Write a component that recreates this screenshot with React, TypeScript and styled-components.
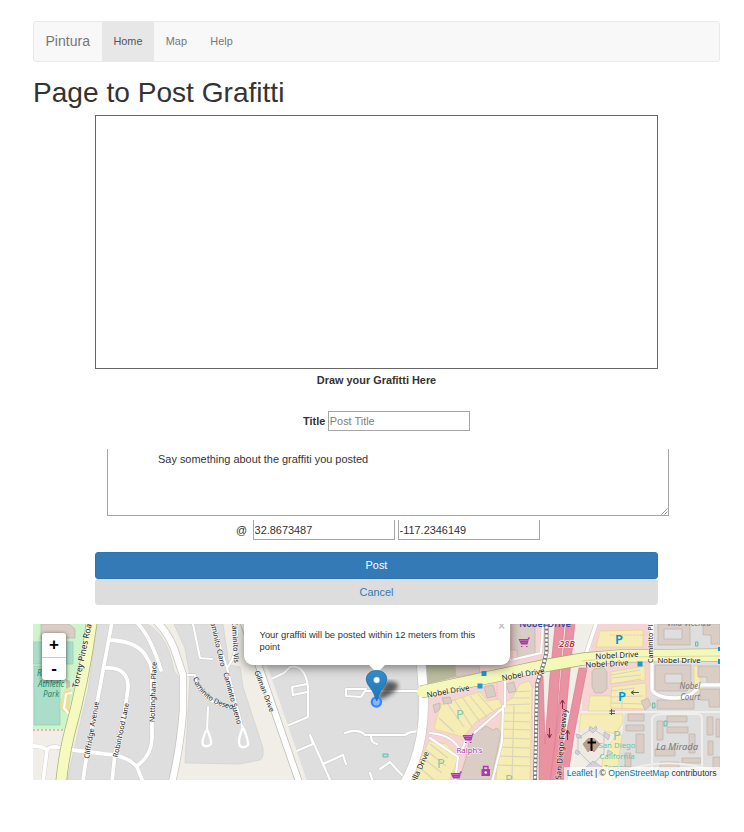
import React from "react";
import styled, { createGlobalStyle, css } from "styled-components";

const GlobalStyle = createGlobalStyle`
  *, *::before, *::after { box-sizing: border-box; }
  body {
    margin: 0;
    background: #fff;
    color: #333;
    font-family: "Liberation Sans", Arial, sans-serif;
    font-size: 11px;
    line-height: 16px;
  }
`;

const Page = styled.div`
  width: 744px;
  min-height: 832px;
  padding: 21px 24px 0 33px;
`;

const Navbar = styled.nav`
  display: flex;
  height: 41px;
  border: 1px solid #e9e9e9;
  border-radius: 3px;
  background: #f8f8f8;
`;

const Brand = styled.a`
  width: 68px;
  padding-left: 11.5px;
  color: #777;
  font-size: 14.04px;
  line-height: 39px;
`;

const NavLink = styled.a<{ $active?: boolean }>`
  padding: 0 11.9px 0 11.4px;
  color: ${(p) => (p.$active ? "#555" : "#777")};
  background: ${(p) => (p.$active ? "#e7e7e7" : "transparent")};
  font-size: 10.92px;
  line-height: 39px;
`;

const Heading = styled.h1`
  margin: 15px 0 7px;
  font-size: 28.1px;
  font-weight: 400;
  line-height: 31px;
`;

const Form = styled.form`
  display: flex;
  flex-direction: column;
  width: 563px;
  margin-left: 62px;
`;

const Canvas = styled.div`
  height: 254px;
  border: 1px solid #666;
`;

const CanvasLabel = styled.strong`
  margin-top: 3px;
  text-align: center;
  font-size: 10.92px;
`;

const TitleRow = styled.label`
  display: flex;
  align-items: center;
  gap: 3px;
  margin: 23px 0 0 208px;
  font-size: 10.92px;
  font-weight: 700;
`;

const TextInput = styled.input<{ $open?: boolean }>`
  width: 142px;
  height: 20px;
  padding: 0 0.6px;
  border: 1px solid #a6a6a6;
  border-radius: 0;
  outline: 0;
  background: #fff;
  color: #333;
  font: 10.92px "Liberation Sans", Arial, sans-serif;
  ${(p) => p.$open && css`border-top: 0;`}
  &::placeholder { color: #808080; opacity: 1; }
`;

const DescriptionBox = styled.div`
  position: relative;
  width: 562px;
  height: 67px;
  margin: 18px 0 0 12px;
`;

const Description = styled.textarea`
  display: block;
  width: 100%;
  height: 100%;
  padding: 3px 50px;
  border: 1px solid #a6a6a6;
  border-top: 0;
  outline: 0;
  resize: none;
  color: #333;
  font: 10.95px/15.6px "Liberation Sans", Arial, sans-serif;
`;

const Grip = styled.svg`
  position: absolute;
  right: 1px;
  bottom: 1px;
  width: 7px;
  height: 7px;
`;

const CoordinateRow = styled.div`
  display: flex;
  align-items: center;
  margin: 4px 0 0 141px;
  gap: 3px;
`;

const At = styled.span`
  width: 14px;
  font-size: 10.92px;
`;

const Button = styled.button<{ $primary?: boolean }>`
  height: 26.5px;
  border: 1px solid ${(p) => (p.$primary ? "#2e74b0" : "#ddd")};
  border-radius: 3px;
  background: ${(p) => (p.$primary ? "#337ab7" : "#ddd")};
  color: ${(p) => (p.$primary ? "#fff" : "#337ab7")};
  font: 10.92px "Liberation Sans", Arial, sans-serif;
  padding: 0;
  &:first-of-type { margin-top: 12px; }
`;

const MapFrame = styled.section`
  position: relative;
  height: 156px;
  margin-top: 19px;
  overflow: hidden;
  background: #f1eee8;
`;

const MapSvg = styled.svg`
  display: block;
  width: 687px;
  height: 156px;
  text { font-family: "Noto Sans", sans-serif; }
`;

const ZoomControls = styled.div`
  position: absolute;
  left: 9px;
  top: 9px;
  width: 24px;
  border-radius: 3px;
  background: #fff;
  box-shadow: 0 1px 4px rgba(0, 0, 0, 0.65);
`;

const ZoomButton = styled.a`
  display: block;
  height: 23.5px;
  color: #000;
  text-align: center;
  font: 700 17px/24px "Liberation Sans", Arial, sans-serif;
  & + & { border-top: 1px solid #ccc; line-height: 22px; }
`;

const Popup = styled.div`
  position: absolute;
  left: 211px;
  top: -14px;
  width: 266px;
  height: 55px;
  padding: 19px 30px 0 15.5px;
  border-radius: 9px;
  background: #fff;
  box-shadow: 0 2px 11px rgba(0, 0, 0, 0.5);
  color: #333;
  font-size: 9.4px;
  line-height: 12px;
`;

const Close = styled.span`
  position: absolute;
  right: 5px;
  top: 9px;
  color: #c3c3c3;
  font-size: 12px;
  font-weight: 700;
  line-height: 14px;
`;

const MarkerLayer = styled.svg`
  position: absolute;
  left: 323px;
  top: 38px;
  width: 50px;
  height: 50px;
`;

const Attribution = styled.div`
  position: absolute;
  right: 0;
  bottom: 0;
  width: 156px;
  height: 13px;
  padding-right: 3.5px;
  background: rgba(255, 255, 255, 0.72);
  text-align: right;
  white-space: nowrap;
  font-size: 8.62px;
  line-height: 13px;
  a { color: #0078a8; }
`;

const roads = [
  "M112 622L97 703Q86 754 83 782",
  "M109 640Q139 641 147 658Q153 666 152 680V735Q153 754 137 766",
  "M105 668Q129 667 128 688L124 716Q119 740 115 753L112 782",
  "M33 746Q42 746 47 750Q49 746 57 747L73 750L105 754Q127 755 137 767L143 782",
  "M47 750L43 782",
  "M135 621Q150 634 161 670",
];

const lanes = [
  "M193 624L200 658L212 659",
  "M213 624L227 668L243 730",
  "M237 624Q238 655 227 668",
  "M185 675H195Q198 701 230 708",
  "M208 707L207 732",
  "M267 681L284 673L290 667Q305 664 308 687V717L289 725L280 723",
  "M307 684L292 687L293 695L307 692",
  "M292 753L313 744L310 735L323 764L343 755L346 764M323 764L330 780",
  "M420 691H365L361 697L346 696V689H366",
  "M345 733Q358 728 365 735L405 735Q412 730 423 732M371 736Q371 743 377 744M380 769L390 762Q397 770 403 776M370 773L373 782",
];

const aisles = [
  "M447 703L464 727M454 699L472 727M462 697L480 722M470 696L487 717M478 694L493 711M439 718L454 732",
  "M430 744L448 758M426 750L446 766M423 758L442 773M419 767L434 780",
  "M512 692L530 691M511 698L530 698M503 705L530 704M501 713L530 713M500 721L530 722M499 729L530 730M498 738L530 739M497 747L530 748M497 756L530 757M496 765L530 766M514 704L512 780",
  "M611 675L640 670M612 678L641 675M611 684L641 679M611 691L635 688M610 697L643 696M610 703L643 704M622 688V708",
];

const buildings = [
  "M41 624H69L75 629V638H61V634H46V639H41Z",
  "M455 666H479L480 673L456 677Z",
  "M442 698L450 697L452 703L444 704Z",
  "M433 705L440 703V709L435 713Z",
  "M484 687L493 685L496 696L487 698Z",
  "M506 684L514 682L516 691L509 693Z",
  "M511 624H535V655L517 659V650H511Z",
  "M470 737L486 726L493 730L497 728L501 733L491 780H459L466 758Z",
  "M594 669L603 667L607 672V689L602 693H595L592 687V672Z",
  "M658 624H690V645H658Z M664 629V639H682V629Z",
  "M703 624H720V644H711V635H703Z",
  "M655 665H691V685L687 691H655Z M665 674V683H682V674Z",
  "M698 666H720V685H707V677H698Z M700 689H720V707H709V700H700Z",
  "M657 700H694V709H657Z",
  "M641 701L648 698L651 705L645 710Z",
  "M628 714H644V721H628Z M626 725H644V731H626Z M636 734H644V753H636Z M625 753H631V774H625Z",
  "M667 716H687V722H667Z M667 727H688V733H667Z M657 721H663V740H657Z M655 749H675V756H655Z M689 734H695V753H689Z M682 758H701V763H682Z",
  "M707 717H713V735H707Z M716 719H720V737H716Z M708 741H713V755H708Z M713 757H720V772H713Z M660 762H679V768H660Z",
];

const Shopping = ({ x, y }: { x: number; y: number }) => (
  <g transform={`translate(${x} ${y})`} fill="none" stroke="#ac39ac" strokeWidth="1.2">
    <path d="M11 0H9.5L8 6H2M8.8 1.5H0.5L2 5H8.2M3 2V5M5 2V5M7 2V5M0.8 3.3H8.4M2 8.5H3.5M7 8.5H8.5" />
  </g>
);

const StreetName = ({ x, y, angle, size = 7.2, children }: {
  x: number; y: number; angle: number; size?: number; children: string;
}) => (
  <text
    transform={`translate(${x} ${y}) rotate(${angle})`}
    fontSize={size} textAnchor="middle" dominantBaseline="central"
    fill="#222" stroke="#fff" strokeOpacity=".5" strokeWidth="1.4" paintOrder="stroke"
  >{children}</text>
);

const StreetMap = () => (
  <MapSvg viewBox="33 624 687 156">
    <path fill="#cdf5cb" d="M33 624H90L65 729H33Z" />
    <path fill="#aadecb" stroke="#93cbb5" strokeWidth=".7" d="M33 642H73V664H33Z M34 666H60V725H34Z" />
    <path d="M33 730H63" stroke="#e99" strokeWidth="1.3" strokeDasharray="2 2" />
    <path d="M64 690L71 689L69 713L62 712L60 705Z" fill="#eddf9b" />
    <path d="M72 693L66 694L64 708L69 714" fill="none" stroke="#fff" strokeWidth="2" />
    <path d="M66 679L70 681V687L66 689Z" fill="#c9bdb2" />
    <g fill="#dedede" stroke="#cfcdca" strokeWidth=".6">
      <path d="M97 624H147Q168 635 174 671L180 679V709Q177 742 169 780H67L88 690Z" />
      <path d="M174 624H223L229 665L240 667L243 687L263 748Q264 758 260 760L240 764L185 763L190 677L185 648Z" />
      <path d="M253 624H418V780H306L270 684Z" />
    </g>
    <path fill="#f5d5d3" d="M426 663L540 624H545V681L533 690V780H408Q428 746 429 700Z" />
    <path fill="#babd9f" d="M420 662H456V677L424 685Z" />
    <path fill="#dedede" d="M620 624H720V780H617L625 710L643 700Z" />
    <path fill="#f5d5d3" d="M590 624H649V700L645 711H582L583 670Z" />
    <g fill="#f6edb4" stroke="#e3d28e" strokeWidth=".7">
      <path d="M438 713L441 705L466 696L480 692L487 701L499 699L502 706L476 722L463 737L434 729Z" />
      <path d="M429 741L446 744L459 757L450 780H411Z" />
      <path d="M502 705L512 698L520 684L529 681L532 686L530 780H496Z" />
      <path d="M600 631L643 630V647H596Z" />
      <path d="M611 672L645 666V680L611 684ZM612 687L646 683V709L610 708Z" />
      <path d="M581 714H623V722L616 734L592 728L579 732Z" />
      <path d="M590 696H611V711H588Z" />
      <path d="M604 751L617 735H622L616 780H600Z" />
      <path d="M694 666H700V685H703V692H696V686H694Z" />
    </g>
    <g fill="none" stroke="#d9d3ba" strokeWidth="1.1">
      {aisles.map((d) => <path key={d} d={d} />)}
    </g>
    <g fill="#d9cdc5" stroke="#c1b1a6" strokeWidth=".7" fillRule="evenodd">
      {buildings.map((d) => <path key={d} d={d} />)}
    </g>
    <path fill="#f1eee8" d="M546 624H597L588 660L579 714L574 780H533V690L542 670Z" />
    <path fill="#eeeae3" d="M577 735L583 728H602L610 738L608 753L592 769L575 750Z" />
    <g fill="none" strokeLinecap="round" strokeLinejoin="round">
      <g stroke="#cac7c3" strokeWidth="4.6">{roads.map((d) => <path key={d} d={d} />)}</g>
      <g stroke="#fff" strokeWidth="3.8">{roads.map((d) => <path key={d} d={d} />)}</g>
      <g stroke="#c8c6c3" strokeWidth="3">{lanes.map((d) => <path key={d} d={d} />)}</g>
      <g stroke="#fff" strokeWidth="2.2">{lanes.map((d) => <path key={d} d={d} />)}</g>
      <path stroke="#fff" strokeWidth="2.3" d="M207 729Q201 741 203 745Q207 748 211 744Q212 741 207 729M243 727Q237 742 240 746Q244 749 248 745Q249 742 243 727" />
      <path stroke="#c8c5c0" strokeWidth="8" d="M155 620Q171 635 177 657L183 675V711Q180 750 172 782" />
      <path stroke="#fff" strokeWidth="6.5" d="M155 620Q171 635 177 657L183 675V711Q180 750 172 782" />
      <path stroke="#f1eee8" strokeWidth="16" d="M244 624L262 675L299 782" />
      <path stroke="#bbb9b5" strokeWidth="7.4" d="M244 624L262 675L299 782" />
      <path stroke="#fff" strokeWidth="6" d="M244 624L262 675L299 782" />
      <path stroke="#c8c5c0" strokeWidth="10" d="M421 661L423 687Q427 744 405 782" />
      <path stroke="#fff" strokeWidth="8.8" d="M421 661L423 687Q427 744 405 782" />
      <path stroke="#d8c8c6" strokeWidth="3" d="M430 733Q455 735 461 753L466 740L496 714L505 706V680M503 706L502 742L492 782M430 738L458 757L455 782M511 660L541 653L543 624" />
      <path stroke="#fff" strokeWidth="2.2" d="M430 733Q455 735 461 753L466 740L496 714L505 706V680M503 706L502 742L492 782M430 738L458 757L455 782M511 660L541 653L543 624" />
      <path stroke="#d2cac7" strokeWidth="4.6" d="M597 621L585 657M652 657V690Q657 698 675 698Q693 698 699 685H720M652 657V622" />
      <path stroke="#fff" strokeWidth="3.4" d="M597 621L585 657M652 657V690Q657 698 675 698Q693 698 699 685H720M652 657V622" />
      <path stroke="#f1efeb" strokeWidth="2" d="M624 712H720M652 718V780M702 718V780M652 718Q654 714 665 714H697Q702 714 702 719M625 771Q667 755 719 772" />
      <path stroke="#ffb8b4" strokeWidth="1.2" strokeDasharray="1 2" d="M512 626V661M610 635H645M427 693L512 667M477 666L512 657M497 683V700" />
    </g>
    <g fill="#e892a2" stroke="#dc7890" strokeWidth=".7">
      <path d="M555.5 622H564.5L559 682L553 782H539V676H543L545 744L550 676Z" />
      <path d="M566.5 622H575L569 680L564 735L557 782H550L556 735L561 676Z" />
      <path d="M579 668H587L574 735L567 782H557L566 735Z" />
    </g>
    <path d="M92 620Q84 681 69 735Q64 755 61 783" fill="none" stroke="#a9b178" strokeWidth="11.5" />
    <path d="M92 620Q84 681 69 735Q64 755 61 783" fill="none" stroke="#f7fabf" strokeWidth="10" />
    <path d="M421 692L481 679L543 666L583 659L620 656L721 655" fill="none" stroke="#a2a86b" strokeWidth="13" />
    <path d="M423 691.6L481 679L543 666L583 659L620 656L721 655" fill="none" stroke="#f4f8b8" strokeWidth="11.8" strokeLinecap="round" />
    <path d="M582 661L621 657L721 656" fill="none" stroke="#c2c891" strokeWidth=".6" />
    <path d="M546.5 622V652L544 663L537 684L535 782" fill="none" stroke="#777" strokeWidth="4" />
    <path d="M546.5 622V652L544 663L537 684L535 782" fill="none" stroke="#fff" strokeWidth="2.6" strokeDasharray="2.6 1.6" />
    <path fill="#129bd8" d="M481.500 671H486.500V676H481.500ZM477.500 683.500H482.500V688.500H477.500ZM637.500 661.500H642.500V666.500H637.500ZM718 647H720V651H718ZM718 659H720V664H718Z" />
    <StreetName x={82} y={653} angle={-78} size={8.4}>Torrey Pines Road</StreetName>
    <StreetName x={91} y={730} angle={-80}>Cliffridge Avenue</StreetName>
    <StreetName x={120.5} y={730} angle={-78}>Robinhood Lane</StreetName>
    <StreetName x={152.500} y={692} angle={-88}>Nottingham Place</StreetName>
    <StreetName x={218} y={642} angle={77}>Caminito Claro</StreetName>
    <StreetName x={236} y={642} angle={87}>Caminito Vis</StreetName>
    <StreetName x={233} y={698} angle={75}>Caminito Sueno</StreetName>
    <path id="deseo" d="M193 678Q201 704 236 710" fill="none" />
    <text fontSize="7.2" fill="#333"><textPath href="#deseo">Caminito Deseo</textPath></text>
    <StreetName x={265} y={691} angle={69}>Gilman Drive</StreetName>
    <StreetName x={448} y={691} angle={-10} size={7.8}>Nobel Drive</StreetName>
    <StreetName x={523} y={674} angle={-10} size={7.8}>Nobel Drive</StreetName>
    <StreetName x={617} y={655} angle={-3} size={7.8}>Nobel Drive</StreetName>
    <StreetName x={607} y={663.500} angle={-3} size={7.8}>Nobel Drive</StreetName>
    <StreetName x={679} y={659.500} angle={0} size={7.8}>Nobel Drive</StreetName>
    <StreetName x={417} y={773} angle={-66} size={7.8}>La Jolla Drive</StreetName>
    <StreetName x={560.500} y={744} angle={-85} size={8}>San Diego Freeway</StreetName>
    <StreetName x={649.500} y={638} angle={-90}>Caminito Plaza</StreetName>
    <text x="545" y="627" textAnchor="middle" fontSize="9" fontWeight="600" fill="#3549a8">Nobel Drive</text>
    <g fontStyle="italic" fontSize="8" textAnchor="middle">
      <g fill="#238c66"><text x="43" y="676">Rec</text><text x="51" y="687">Athletic</text><text x="51" y="697">Park</text></g>
      <g fill="#777"><text x="690" y="688.500">Nobel</text><text x="690" y="699.500">Court</text><text x="677" y="750" fontSize="9.400">La Mirada</text><text x="689" y="626">Villa Vicenza</text></g>
      <text x="567" y="646.500" fontSize="9" fontWeight="600" fill="#ad2f44" stroke="#fff" strokeWidth="1.5" paintOrder="stroke">28B</text>
    </g>
    <g fontSize="13" textAnchor="middle">
      <g fill="#80cbae"><text x="460" y="719">P</text><text x="441" y="768">P</text><text x="509" y="784">P</text><text x="617" y="740">P</text></g>
      <g fill="#0092da" fontWeight="600"><text x="619" y="644">P</text><text x="622" y="701">P</text></g>
    </g>
    <g fill="#d3d2df" stroke="#b2b1b6" strokeWidth=".7"><path d="M576 734L580 735L582 738L577 738ZM604 732L610 735L608 740L604 736ZM590 726L593 729L596 726L597 729L593 733L589 730ZM576 750L580 752L578 755L575 753ZM608 750L613 753L607 756ZM593 761L602 767L599 776H587L586 767Z" /></g>
    <path d="M590 730L578 738V751L592 765M596 731L604 736V753L594 763" fill="none" stroke="#bbb5ac" strokeWidth=".7" />
    <g fill="#63c6a9" fontSize="7.800" textAnchor="middle"><text x="617" y="748">San Diego</text><text x="617" y="759">California</text><text x="617" y="770">Temple</text></g>
    <text x="469.500" y="753" textAnchor="middle" fontSize="7.800" fill="#aa35aa" stroke="#fff" strokeWidth="1" paintOrder="stroke">Ralph's</text>
    <Shopping x={463} y={734} /><Shopping x={451} y={772} /><Shopping x={519} y={638} />
    <path fill="#ac39ac" d="M481.500 769H490V776H481.500Z" /><path fill="none" stroke="#ac39ac" strokeWidth="1.3" d="M483.500 769V766.500H488V769" />
    <circle cx="485.700" cy="772.500" r="1.300" fill="#fff" />
    <path fill="#bca08e" stroke="#a78c7c" strokeWidth=".7" d="M583 744L588 738.500H594L600 744L594 752L591 749L588 752Z" />
    <path d="M591.500 738V751M587.500 742.500H596" stroke="#000" strokeWidth="2" />
    <g fill="none" stroke="#8f254a" strokeWidth="1"><path d="M562.500 709V700M560.500 703.500L562.500 700L564.500 703.500M549.500 728V738M547.500 734L549.500 738L551.500 734M567.500 740V730M565.500 734L567.500 730L569.500 734" /></g>
    <path d="M639 692.500H631M634 690.500L631 692.500L634 694.500M609.500 711H615M609.500 713.500H615M611.500 709V715" fill="none" stroke="#555" />
    <g fill="#b5e2db" stroke="#5daea5" strokeWidth=".8"><path d="M695.500 642H698V646H695.500ZM652.500 703H655V708H652.500ZM664 721H667V726H664ZM383 754H388V757H383Z" /></g>
  </MapSvg>
);

const Marker = () => (
  <MarkerLayer viewBox="356 662 50 50">
    <defs>
      <linearGradient id="pin" x2="0" y2="1"><stop stopColor="#368bc9" /><stop offset="1" stopColor="#1678bf" /></linearGradient>
      <filter id="soft"><feGaussianBlur stdDeviation="2" /></filter>
    </defs>
    <path d="M376 701L386 681Q399 681 398 687Q394 695 376 701Z" fill="#222" opacity=".7" filter="url(#soft)" />
    <path d="M368 664H386L377 673Z" fill="#fff" />
    <circle cx="376.4" cy="702" r="4.6" fill="#8cb4f5" stroke="#3388ff" strokeWidth="2.3" />
    <path d="M376.700 701Q374 692 369 686C363 678 368 670.500 376.700 670.500S390 678 384 686Q379 692 376.700 701Z" fill="url(#pin)" stroke="#2469a0" strokeWidth=".8" />
    <circle cx="376.700" cy="680" r="3.300" fill="#fff" stroke="#3178aa" strokeWidth=".5" />
  </MarkerLayer>
);

export default function App() {
  return (
    <>
      <GlobalStyle />
      <Page>
        <Navbar><Brand>Pintura</Brand><NavLink $active>Home</NavLink><NavLink>Map</NavLink><NavLink>Help</NavLink></Navbar>
        <Heading>Page to Post Grafitti</Heading>
        <Form onSubmit={(e: React.FormEvent) => e.preventDefault()}>
          <Canvas />
          <CanvasLabel>Draw your Grafitti Here</CanvasLabel>
          <TitleRow>Title<TextInput placeholder="Post Title" /></TitleRow>
          <DescriptionBox>
            <Description defaultValue="Say something about the graffiti you posted" />
            <Grip viewBox="0 0 7 7"><path d="M0.500 6.500L6.500 0.500M3.500 6.500L6.500 3.500" stroke="#888" strokeWidth=".9" /></Grip>
          </DescriptionBox>
          <CoordinateRow><At>@</At><TextInput $open defaultValue="32.8673487" /><TextInput $open defaultValue="-117.2346149" /></CoordinateRow>
          <Button type="submit" $primary>Post</Button>
          <Button type="button">Cancel</Button>
        </Form>
        <MapFrame>
          <StreetMap />
          <Popup>Your graffiti will be posted within 12 meters from this point<Close>×</Close></Popup>
          <Marker />
          <ZoomControls><ZoomButton>+</ZoomButton><ZoomButton>-</ZoomButton></ZoomControls>
          <Attribution><a>Leaflet</a> | © <a>OpenStreetMap</a> contributors</Attribution>
        </MapFrame>
      </Page>
    </>
  );
}
